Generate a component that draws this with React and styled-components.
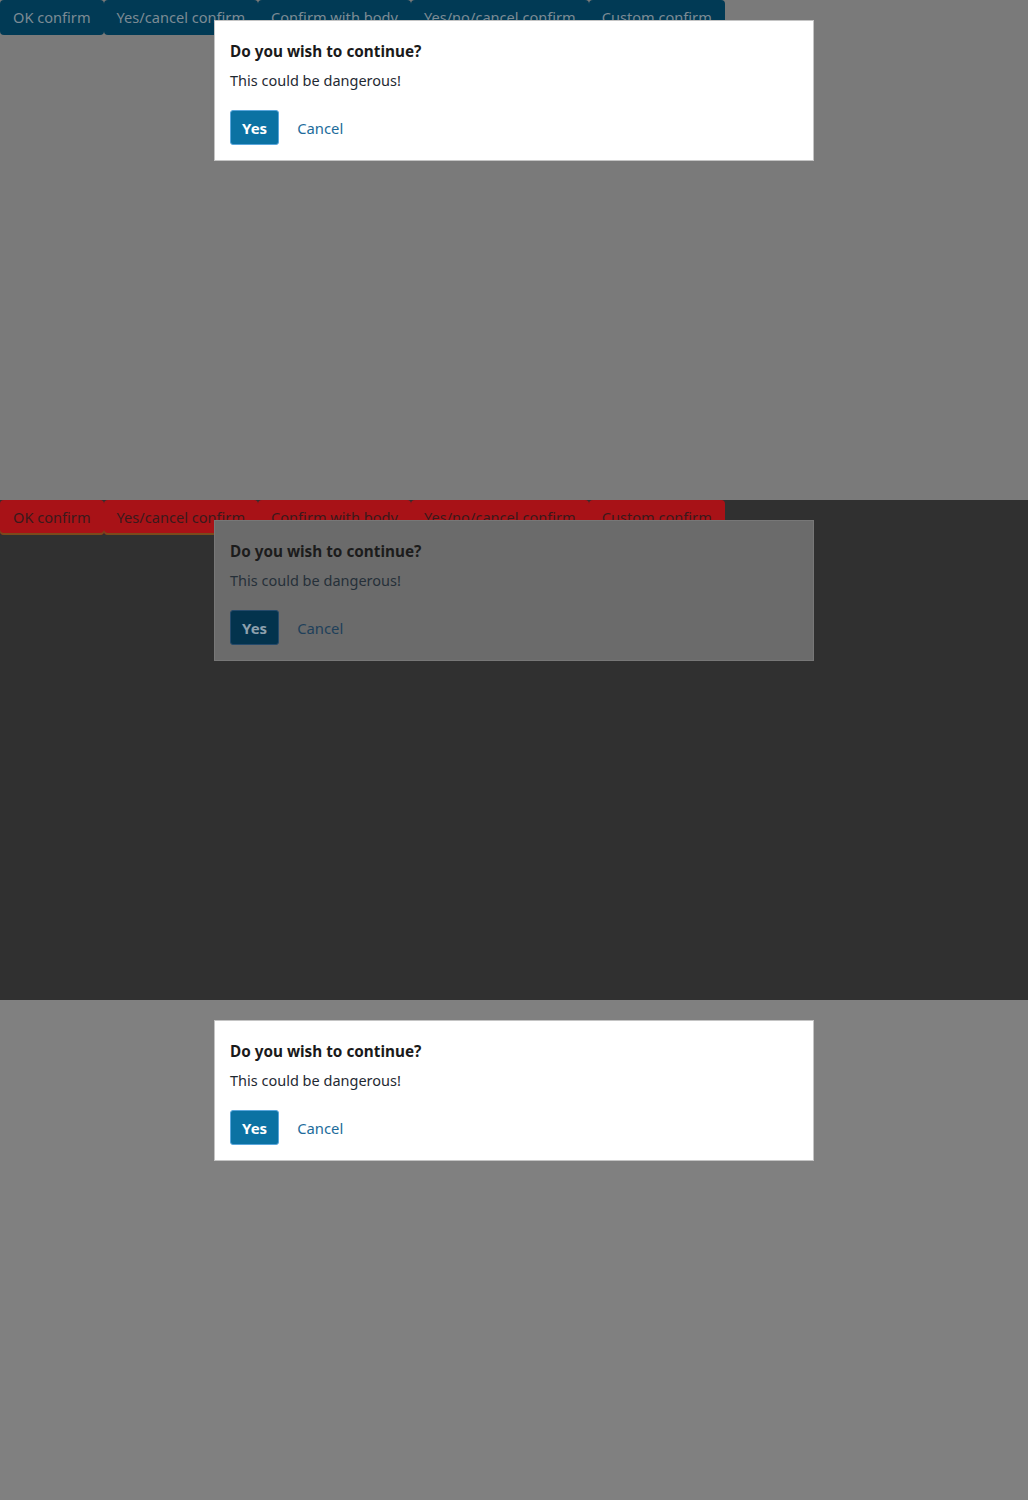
import React from 'react';
import styled, { createGlobalStyle } from 'styled-components';

const Global = createGlobalStyle`
	html, body {
		margin: 0;
		padding: 0;
		background: #808080;
	}
	body {
		font-family: "Noto Sans", "Open Sans", sans-serif;
	}
`

const themes = {
	light: {
		page: '#7a7a7a',
		tab: '#013a55',
		tabText: '#7c8b94',
		tabEdge: 'transparent',
		dialog: '#ffffff',
		border: '#c4c4c4',
		title: '#1a1a1a',
		body: '#1f2a33',
		yes: '#0b72a3',
		yesBorder: '#5aa6dc',
		yesText: '#ffffff',
		link: '#1d6c9b',
	},
	dark: {
		page: '#303030',
		tab: '#a81217',
		tabText: '#3a1a1c',
		tabEdge: '#7a4a1c',
		dialog: '#6b6b6b',
		border: '#777777',
		title: '#1c1c1c',
		body: '#263039',
		yes: '#03334d',
		yesBorder: '#24496a',
		yesText: '#8da0ad',
		link: '#20405a',
	},
	plain: {
		page: '#808080',
		dialog: '#ffffff',
		border: '#c4c4c4',
		title: '#1a1a1a',
		body: '#1f2a33',
		yes: '#0b72a3',
		yesBorder: '#5aa6dc',
		yesText: '#ffffff',
		link: '#1d6c9b',
	},
}

const Section = styled.section `
	position: relative;
	height: 500px;
	background: ${p => p.t.page};
	overflow: hidden;
`

const Toolbar = styled.div `
	display: flex;
	align-items: stretch;
	height: 35px;
`

const Tab = styled.button `
	height: 35px;
	padding: 0 13px;
	border: none;
	border-radius: 4px;
	box-shadow: inset 0 -2px 0 ${p => p.t.tabEdge};
	background: ${p => p.t.tab};
	color: ${p => p.t.tabText};
	font-family: inherit;
	font-size: 14.6px;
	line-height: 35px;
	white-space: nowrap;
	cursor: pointer;
`

const Dialog = styled.div `
	position: absolute;
	top: 20px;
	left: 214px;
	width: 600px;
	box-sizing: border-box;
	padding: 20px 15px 15px;
	background: ${p => p.t.dialog};
	border: 1px solid ${p => p.t.border};
`

const Title = styled.div `
	font-size: 15.3px;
	font-weight: 700;
	line-height: 20px;
	color: ${p => p.t.title};
`

const Body = styled.div `
	margin-top: 9px;
	font-size: 14.5px;
	line-height: 20px;
	color: ${p => p.t.body};
`

const Actions = styled.div `
	display: flex;
	align-items: center;
	gap: 5px;
	margin-top: 20px;
`

const YesButton = styled.button `
	height: 35px;
	padding: 0 11px;
	background: ${p => p.t.yes};
	border: 1px solid ${p => p.t.yesBorder};
	border-radius: 3px;
	color: ${p => p.t.yesText};
	font-family: inherit;
	font-size: 15px;
	font-weight: 700;
	cursor: pointer;
`

const LinkButton = styled.button `
	height: 35px;
	padding: 0 13px;
	background: none;
	border: none;
	color: ${p => p.t.link};
	font-family: inherit;
	font-size: 14.8px;
	cursor: pointer;
`

const tabs = ['OK confirm', 'Yes/cancel confirm', 'Confirm with body', 'Yes/no/cancel confirm', 'Custom confirm']

function ConfirmDemo ({ t, showTabs }) {
	return (
		<Section t={t}>
			{showTabs && (
				<Toolbar>
					{tabs.map(label => <Tab key={label} t={t}>{label}</Tab>)}
				</Toolbar>
			)}
			<Dialog t={t} role="dialog">
				<Title t={t}>Do you wish to continue?</Title>
				<Body t={t}>This could be dangerous!</Body>
				<Actions>
					<YesButton t={t}>Yes</YesButton>
					<LinkButton t={t}>Cancel</LinkButton>
				</Actions>
			</Dialog>
		</Section>
	)
}

function App () {
	return (
		<>
			<Global />
			<ConfirmDemo t={themes.light} showTabs />
			<ConfirmDemo t={themes.dark} showTabs />
			<ConfirmDemo t={themes.plain} />
		</>
	)
}

export default App;
